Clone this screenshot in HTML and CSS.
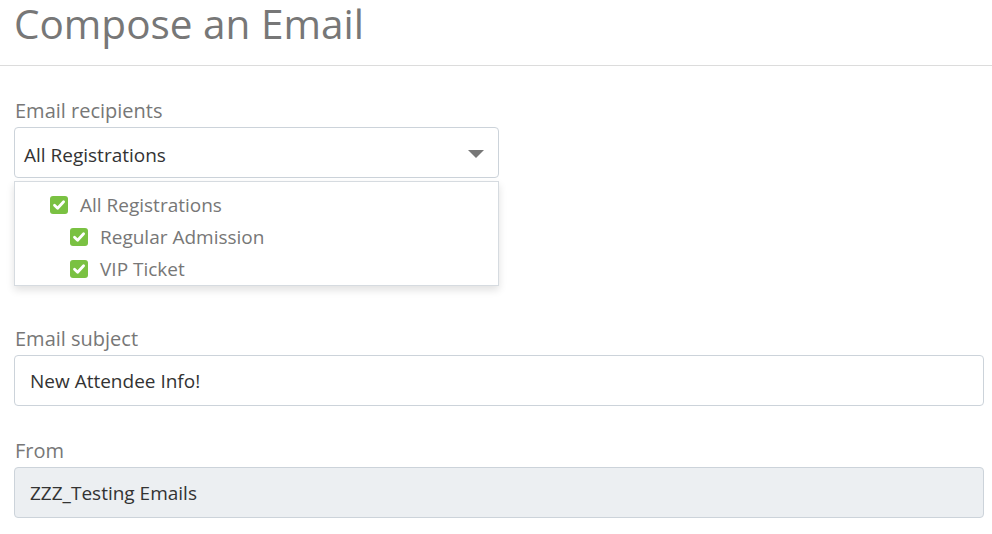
FILE: index.html
```html
<!DOCTYPE html>
<html>
<head>
<meta charset="utf-8">
<link rel="stylesheet" href="styles.css">
</head>
<body>
<header class="page-header">
  <h1 class="title">Compose an Email</h1>
</header>
<form class="form">
  <div class="group group-recipients">
    <label class="label">Email recipients</label>
    <div class="select-wrap">
      <div class="select">
        <span class="select-value">All Registrations</span>
        <span class="caret"></span>
      </div>
      <div class="dropdown">
        <div class="option">
          <span class="check"><svg viewBox="0 0 18 18" width="18" height="18"><path d="M4.5 9.2 L7.6 12.2 L13.6 5.8" fill="none" stroke="#fff" stroke-width="2.8" stroke-linecap="round" stroke-linejoin="round"/></svg></span>
          <span class="option-text">All Registrations</span>
        </div>
        <div class="option option-nested">
          <span class="check"><svg viewBox="0 0 18 18" width="18" height="18"><path d="M4.5 9.2 L7.6 12.2 L13.6 5.8" fill="none" stroke="#fff" stroke-width="2.8" stroke-linecap="round" stroke-linejoin="round"/></svg></span>
          <span class="option-text">Regular Admission</span>
        </div>
        <div class="option option-nested">
          <span class="check"><svg viewBox="0 0 18 18" width="18" height="18"><path d="M4.5 9.2 L7.6 12.2 L13.6 5.8" fill="none" stroke="#fff" stroke-width="2.8" stroke-linecap="round" stroke-linejoin="round"/></svg></span>
          <span class="option-text">VIP Ticket</span>
        </div>
      </div>
    </div>
  </div>
  <div class="group">
    <label class="label">Email subject</label>
    <div class="input">New Attendee Info!</div>
  </div>
  <div class="group">
    <label class="label">From</label>
    <div class="input input-disabled">ZZZ_Testing Emails</div>
  </div>
</form>
</body>
</html>
```

FILE: styles.css
```css
* { box-sizing: border-box; }
html, body { margin: 0; padding: 0; background: #fff; }
body {
  font-family: "Open Sans", "Noto Sans", sans-serif;
  color: #333;
}
.page-header {
  border-bottom: 1px solid #dcdcdc;
  padding: 0 14px;
  height: 66px;
}
.title {
  margin: 0;
  font-weight: 400;
  font-size: 40.5px;
  line-height: 48px;
  color: #777;
}
.form {
  padding: 31px 8px 0 14px;
}
.group {
  display: flex;
  flex-direction: column;
  margin-bottom: 31px;
}
.group-recipients {
  margin-bottom: 147px;
}
.label {
  font-size: 20px;
  line-height: 28px;
  color: #777;
  margin-bottom: 2px;
  padding-left: 1px;
}
.select-wrap {
  position: relative;
  width: 485px;
}
.select {
  height: 51px;
  border: 1px solid #ccd3da;
  border-radius: 4px;
  display: flex;
  align-items: center;
  justify-content: space-between;
  padding: 4px 14px 0 9px;
  font-size: 19px;
  color: #333;
}
.caret {
  width: 0; height: 0;
  border-left: 8px solid transparent;
  border-right: 8px solid transparent;
  border-top: 8px solid #777;
  margin-top: -2px;
}
.dropdown {
  position: absolute;
  top: 54px;
  left: 0;
  right: 0;
  background: #fff;
  border: 1px solid #d6dbe0;
  box-shadow: 0 4px 8px rgba(0,0,0,0.12);
  padding: 7px 0 0 35px;
  height: 105px;
}
.option {
  display: flex;
  align-items: center;
  height: 32px;
  gap: 12px;
  font-size: 19px;
  color: #777;
}
.option-nested { padding-left: 20px; }
.check {
  width: 18px; height: 18px;
  background: #7ac142;
  border-radius: 3px;
  display: flex;
}
.input {
  height: 51px;
  border: 1px solid #ccd3da;
  border-radius: 4px;
  display: flex;
  align-items: center;
  padding: 0 15px;
  font-size: 19px;
  color: #333;
}
.input-disabled { background: #eceff2; }
```
